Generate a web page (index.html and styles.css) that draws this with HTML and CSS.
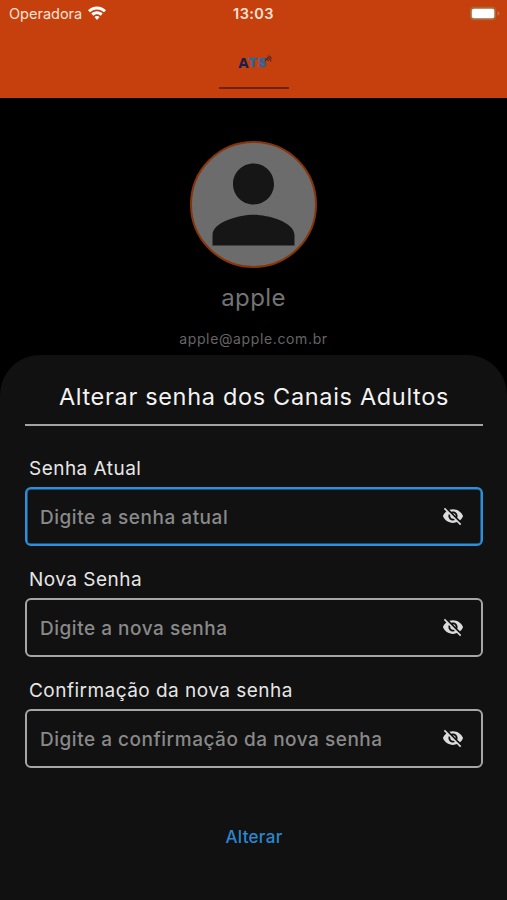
FILE: index.html
```
<!DOCTYPE html>
<html lang="pt-BR">
<head>
<meta charset="utf-8">
<title>Alterar senha</title>
<link rel="stylesheet" href="styles.css">
</head>
<body>
<svg class="defs" aria-hidden="true">
  <symbol id="eye-off" viewBox="0 0 24 24"><path d="M12 7c2.76 0 5 2.24 5 5 0 .65-.13 1.26-.36 1.83l2.92 2.92c1.51-1.26 2.7-2.89 3.43-4.75-1.73-4.39-6-7.5-11-7.5-1.4 0-2.74.25-3.98.7l2.16 2.16C10.74 7.13 11.35 7 12 7zM2 4.27l2.28 2.28.46.46C3.08 8.3 1.78 10.02 1 12c1.73 4.39 6 7.5 11 7.5 1.55 0 3.03-.3 4.38-.84l.42.42L19.73 22 21 20.73 3.27 3 2 4.27zM7.53 9.8l1.55 1.55c-.05.21-.08.43-.08.65 0 1.66 1.34 3 3 3 .22 0 .44-.03.65-.08l1.55 1.55c-.67.33-1.41.53-2.2.53-2.76 0-5-2.24-5-5 0-.79.2-1.53.53-2.2zm4.31-.78l3.15 3.15.02-.16c0-1.66-1.34-3-3-3l-.17.01z"/></symbol>
</svg>
<header class="appbar">
  <div class="status">
    <div class="carrier"><span>Operadora</span>
      <svg class="wifi" viewBox="0 0 20 15"><path d="M10 .5C6.500 .5 3.300 1.900 1 4.200L3 6.300C4.900 4.600 7.300 3.500 10 3.500s5.100 1.100 7 2.800l2-2.100C16.700 1.900 13.500 .5 10 .5z"/><path d="M10 5.300c-2.200 0-4.200 .9-5.700 2.300l2 2.100c1-.9 2.300-1.500 3.700-1.500s2.700.6 3.700 1.500l2-2.100C14.200 6.200 12.200 5.300 10 5.300z"/><path d="M10 10c-1 0-1.900.4-2.500 1.100L10 14l2.500-2.900C11.900 10.400 11 10 10 10z"/></svg>
    </div>
    <div class="time">13:03</div>
    <svg class="battery" viewBox="0 0 31 15"><rect class="shell" x="1" y=".8" width="26" height="13.400" rx="4"/><rect class="charge" x="2.800" y="2.700" width="22.500" height="9.600" rx="2"/><path class="tip" d="M28.500 5.200q2 1 2 2.300t-2 2.300z"/></svg>
  </div>
  <div class="brand">
    <div class="logo"><span class="logo-a">A</span><span class="logo-ts">TS</span>
      <svg class="signal" viewBox="0 0 8 8"><path d="M1 6.500l2-3 1.500 2.500M3 2.500q3 0 4 4M4 .7q3 1 3.500 3"/></svg>
    </div>
    <div class="rule"></div>
  </div>
</header>
<main class="profile">
  <div class="avatar"><svg viewBox="0 0 24 24"><path d="M12 12c2.210 0 4-1.790 4-4s-1.790-4-4-4-4 1.790-4 4 1.790 4 4 4zm0 2c-2.670 0-8 1.340-8 4v2h16v-2c0-2.660-5.330-4-8-4z"/></svg></div>
  <div class="name">apple</div>
  <div class="email">apple@apple.com.br</div>
</main>
<section class="sheet">
  <h1 class="title">Alterar senha dos Canais Adultos</h1>
  <div class="group">
    <div class="label">Senha Atual</div>
    <div class="field focused"><span>Digite a senha atual</span><svg class="eye"><use href="#eye-off"/></svg></div>
  </div>
  <div class="group">
    <div class="label">Nova Senha</div>
    <div class="field"><span>Digite a nova senha</span><svg class="eye"><use href="#eye-off"/></svg></div>
  </div>
  <div class="group">
    <div class="label">Confirmação da nova senha</div>
    <div class="field"><span>Digite a confirmação da nova senha</span><svg class="eye"><use href="#eye-off"/></svg></div>
  </div>
  <div class="action">Alterar</div>
</section>
</body>
</html>
```
FILE: styles.css
```
* { box-sizing: border-box; }
body {
  margin: 0;
  height: 900px;
  display: flex;
  flex-direction: column;
  overflow: hidden;
  background: #000;
  font-family: Inter, "Liberation Sans", sans-serif;
}
.defs { display: none; }
.appbar { height: 98px; background: #c6400d; flex: none; }
.status {
  display: grid;
  grid-template-columns: 1fr auto 1fr;
  align-items: center;
  height: 27px;
  padding: 0 7px 0 9px;
  color: #fbe3d6;
  font-size: 14.5px;
}
.carrier { display: flex; align-items: center; gap: 5px; }
.wifi { width: 20px; height: 15px; fill: #fff; }
.time { font-weight: 600; letter-spacing: 0.4px; margin-right: 2px; }
.battery { width: 31px; height: 15px; justify-self: end; }
.shell { fill: #a9693b; }
.charge { fill: #fff; }
.tip { fill: #b87a50; }
.brand { display: flex; flex-direction: column; align-items: center; padding-top: 29px; }
.logo {
  display: flex;
  height: 14px;
  margin-left: 3px;
  font-family: "DejaVu Sans", sans-serif;
  font-weight: 700;
  line-height: 14px;
}
.logo-a { color: #16204e; font-size: 13.5px; }
.logo-ts { color: #2868a0; font-size: 11.5px; line-height: 15px; letter-spacing: 1.5px; -webkit-text-stroke: 0.7px #2868a0; }
.signal { width: 8px; height: 8px; margin: -1px 0 0 -4px; fill: none; stroke: #4c2733; stroke-width: 1.2; }
.rule { width: 70px; height: 2px; margin-top: 17px; background: #701f08; }
.profile { height: 257px; flex: none; display: flex; flex-direction: column; align-items: center; padding-top: 43px; }
.avatar {
  width: 127px;
  height: 127px;
  border: 2px solid #883409;
  border-radius: 50%;
  background: #6c6c6c;
  display: flex;
  align-items: center;
  justify-content: center;
  flex: none;
}
.avatar svg { width: 123px; height: 123px; flex: none; fill: #161616; }
.name { margin-top: 15px; color: #737373; font-size: 24px; line-height: 30px; letter-spacing: 0.4px; }
.email { margin-top: 16px; color: #656565; font-size: 14px; line-height: 20px; letter-spacing: 0.63px; }
.sheet {
  flex: 1;
  padding: 0 24px 0 25px;
  border-radius: 40px 40px 0 0;
  background: #111;
}
.title {
  height: 71px;
  margin: 0 0 31px;
  padding-top: 27px;
  border-bottom: 2px solid #a3a3a3;
  color: #f3f3f3;
  font-size: 23.5px;
  font-weight: 400;
  line-height: 30px;
  letter-spacing: 0.67px;
  text-align: center;
  white-space: nowrap;
}
.group { height: 111px; }
.label {
  height: 30px;
  padding-left: 4px;
  color: #e6e6e6;
  font-size: 19px;
  line-height: 24px;
  letter-spacing: 0.47px;
}
.field {
  height: 59px;
  display: flex;
  align-items: center;
  justify-content: space-between;
  padding: 1px 17px 0 13px;
  border: 2px solid #a6a6a6;
  border-radius: 6px;
  color: #898989;
  font-size: 19px;
  font-weight: 500;
  letter-spacing: 0.52px;
}
.focused { border-color: #2c90dd; box-shadow: inset 0 0 0 0.5px #2c90dd; }
.eye { width: 22px; height: 22px; margin-top: -2px; fill: #dcdcdc; }
.action {
  margin-top: 35px;
  color: #2b87cf;
  font-size: 17px;
  font-weight: 500;
  line-height: 24px;
  letter-spacing: 0.3px;
  text-align: center;
}
```
